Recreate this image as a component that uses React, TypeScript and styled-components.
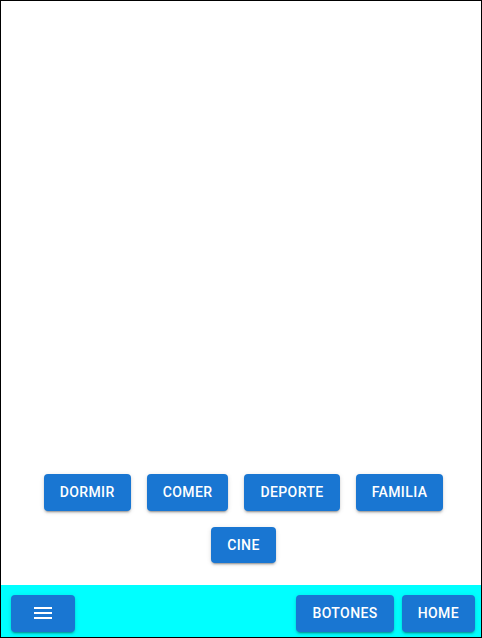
import React from "react";
import styled, { createGlobalStyle } from "styled-components";

const GlobalStyle = createGlobalStyle`
  html, body { margin: 0; padding: 0; background: #fff; }
  * { box-sizing: border-box; }
`;

const Frame = styled.div`
  width: 482px;
  height: 638px;
  border: 1px solid #000;
  display: flex;
  flex-direction: column;
  font-family: Roboto, "Liberation Sans", sans-serif;
  overflow: hidden;
`;

const Main = styled.main`
  flex: 1;
  display: flex;
  flex-direction: column;
  justify-content: flex-end;
  padding: 0 0 14px 5px;
`;

const ButtonWrap = styled.div`
  display: flex;
  flex-wrap: wrap;
  justify-content: center;
`;

const Button = styled.button<{ $spaced?: boolean }>`
  font-family: Roboto, "Liberation Sans", sans-serif;
  font-weight: 500;
  font-size: 14px;
  line-height: 1.75;
  letter-spacing: 0.02857em;
  text-transform: uppercase;
  color: #fff;
  background: #1976d2;
  border: none;
  border-radius: 4px;
  padding: 6px 16px;
  min-width: 64px;
  height: 36.5px;
  margin: ${(p) => (p.$spaced ? "8px" : "0")};
  display: inline-flex;
  align-items: center;
  justify-content: center;
  cursor: pointer;
  box-shadow: 0px 3px 1px -2px rgba(0, 0, 0, 0.2),
    0px 2px 2px 0px rgba(0, 0, 0, 0.14), 0px 1px 5px 0px rgba(0, 0, 0, 0.12);
`;

const Bar = styled.footer`
  height: 52px;
  flex-shrink: 0;
  background: #00ffff;
  display: flex;
  align-items: flex-start;
  padding: 10px 6px 0 10px;
  gap: 8px;
`;

const Spacer = styled.div`
  flex: 1;
`;

const MenuIcon = () => (
  <svg width="24" height="24" viewBox="0 0 24 24" fill="#fff">
    <path d="M3 18h18v-2H3v2zm0-5h18v-2H3v2zm0-7v2h18V6H3z" />
  </svg>
);

const items = ["Dormir", "Comer", "Deporte", "Familia", "Cine"];

export default function App() {
  return (
    <>
      <GlobalStyle />
      <Frame>
        <Main>
          <ButtonWrap>
            {items.map((t) => (
              <Button key={t} $spaced>
                {t}
              </Button>
            ))}
          </ButtonWrap>
        </Main>
        <Bar>
          <Button aria-label="menu">
            <MenuIcon />
          </Button>
          <Spacer />
          <Button>Botones</Button>
          <Button>Home</Button>
        </Bar>
      </Frame>
    </>
  );
}
